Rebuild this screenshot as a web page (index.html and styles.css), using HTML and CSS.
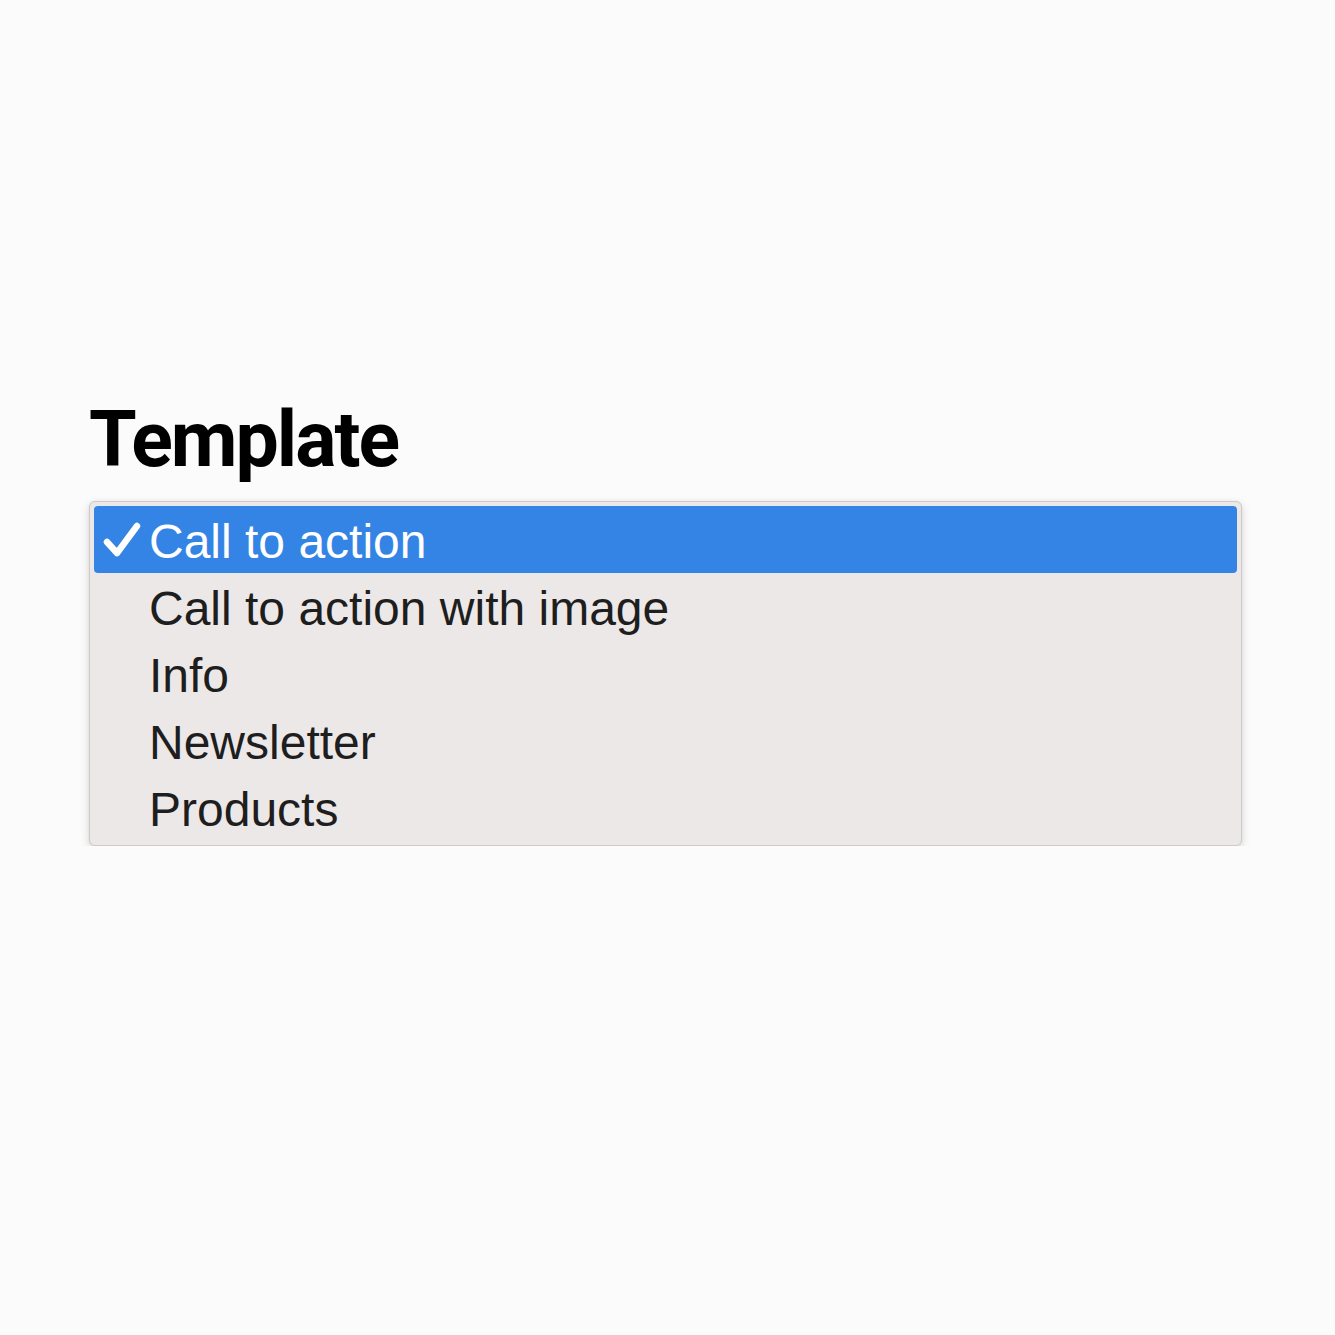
FILE: index.html
```html
<!DOCTYPE html>
<html>
<head>
<meta charset="utf-8">
<link rel="stylesheet" href="styles.css">
</head>
<body>
<main class="page">
  <h1 class="title">Template</h1>
  <div class="listbox" role="listbox">
    <div class="option selected" role="option">
      <span class="mark"><svg viewBox="0 0 38 38" width="38" height="38"><path d="M4 21 L14 32 L34 5" fill="none" stroke="#fff" stroke-width="6.5" stroke-linecap="round" stroke-linejoin="round"/></svg></span>
      <span class="label">Call to action</span>
    </div>
    <div class="option" role="option"><span class="mark"></span><span class="label">Call to action with image</span></div>
    <div class="option" role="option"><span class="mark"></span><span class="label">Info</span></div>
    <div class="option" role="option"><span class="mark"></span><span class="label">Newsletter</span></div>
    <div class="option" role="option"><span class="mark"></span><span class="label">Products</span></div>
  </div>
</main>
</body>
</html>
```
FILE: styles.css
```css
html, body {
  margin: 0;
  padding: 0;
  background: #fbfbfb;
}
.page {
  padding: 394px 93px 0 89px;
}
.title {
  margin: 0 0 15px 0;
  font-family: Roboto, "Liberation Sans", sans-serif;
  font-weight: 700;
  font-size: 77px;
  line-height: 92px;
  color: #000;
  letter-spacing: -2px;
}
.listbox {
  background: #ede8e8;
  border: 1px solid #cfcaca;
  border-radius: 6px;
  box-shadow: 0 3px 9px rgba(0,0,0,0.16), 0 0 2px rgba(0,0,0,0.06);
  padding: 4px;
  font-family: "Liberation Sans", Arial, sans-serif;
  font-size: 48px;
  color: #1e1e1e;
}
.option {
  display: flex;
  align-items: center;
  height: 67px;
  box-sizing: border-box;
  padding-top: 4px;
  line-height: 63px;
  border-radius: 4px;
}
.option.selected {
  background: #3484e6;
  color: #fff;
}
.mark {
  width: 55px;
  flex: none;
  display: flex;
  align-items: center;
  padding-left: 9px;
  box-sizing: border-box;
}
.mark svg {
  display: block;
  margin-top: -4px;
}
.label {
  white-space: nowrap;
}
```
